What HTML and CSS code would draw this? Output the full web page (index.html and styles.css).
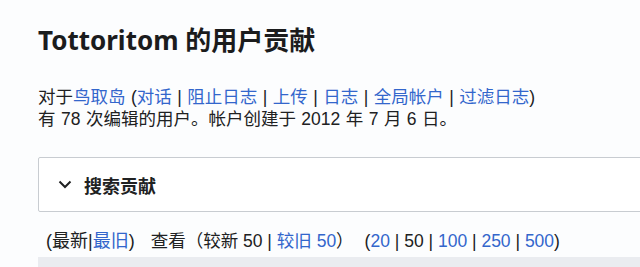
FILE: index.html
```html
<!DOCTYPE html>
<html lang="zh-CN">
<head>
    <meta charset="UTF-8">
    <title>Tottoritom 的用户贡献</title>
    <link rel="stylesheet" href="styles.css">
</head>
<body>
<div class="page">
    <h1 class="title">Tottoritom 的用户贡献</h1>

    <div class="sub">
        <p>对于<a href="#">鸟取岛</a> (<a href="#">对话</a> | <a href="#">阻止日志</a> | <a href="#">上传</a> | <a href="#">日志</a> | <a href="#">全局帐户</a> | <a href="#">过滤日志</a>)</p>
        <p>有 78 次编辑的用户。帐户创建于 2012 年 7 月 6 日。</p>
    </div>

    <div class="search-box">
        <svg class="chev" width="14" height="9" viewBox="0 0 14 9">
            <path d="M1.5 1.5 L7 7 L12.5 1.5" fill="none" stroke="#202122" stroke-width="2"/>
        </svg>
        <span>搜索贡献</span>
    </div>

    <div class="nav">
        <span class="first">(最新|<a href="#">最旧</a>)</span>
        <span class="pager">查看（较新 50 | <a href="#">较旧 50</a>）</span>
        <span class="limits">(<a href="#">20</a> | 50 | <a href="#">100</a> | <a href="#">250</a> | <a href="#">500</a>)</span>
    </div>

    <div class="list-top"></div>
</div>
</body>
</html>
```

FILE: styles.css
```css
* {
    margin: 0;
    padding: 0;
    box-sizing: border-box;
}

body {
    background: #fcfdfe;
    color: #202122;
    font-family: "Liberation Sans", "Noto Sans CJK SC", sans-serif;
    overflow: hidden;
}

.page {
    padding: 20px 0 0 38px;
    margin-right: -40px;
}

a {
    color: #3366cc;
    text-decoration: none;
}

.title {
    font-family: "Noto Sans", "Noto Sans CJK SC", sans-serif;
    font-size: 26px;
    font-weight: bold;
    line-height: 40px;
    color: #1b1c1d;
}

.sub {
    margin-top: 26px;
    font-size: 17.5px;
    line-height: 22px;
    word-spacing: 0.6px;
}

.search-box {
    margin-top: 27px;
    height: 55px;
    border: 1px solid #c8ccd1;
    border-radius: 2px;
    background: #fff;
    display: flex;
    align-items: center;
    padding-left: 19px;
    gap: 12px;
}

.search-box span {
    font-family: "Noto Sans", "Noto Sans CJK SC", sans-serif;
    font-size: 18px;
    font-weight: bold;
}

.nav {
    margin-top: 17px;
    padding-left: 8px;
    font-size: 17.5px;
    line-height: 24px;
    display: flex;
    align-items: baseline;
}

.nav .first {
    font-size: 18px;
    margin-right: 16px;
}

.nav .limits {
    margin-left: 11px;
}

.list-top {
    margin-top: 4px;
    height: 20px;
    background: #eaecf0;
}
```
